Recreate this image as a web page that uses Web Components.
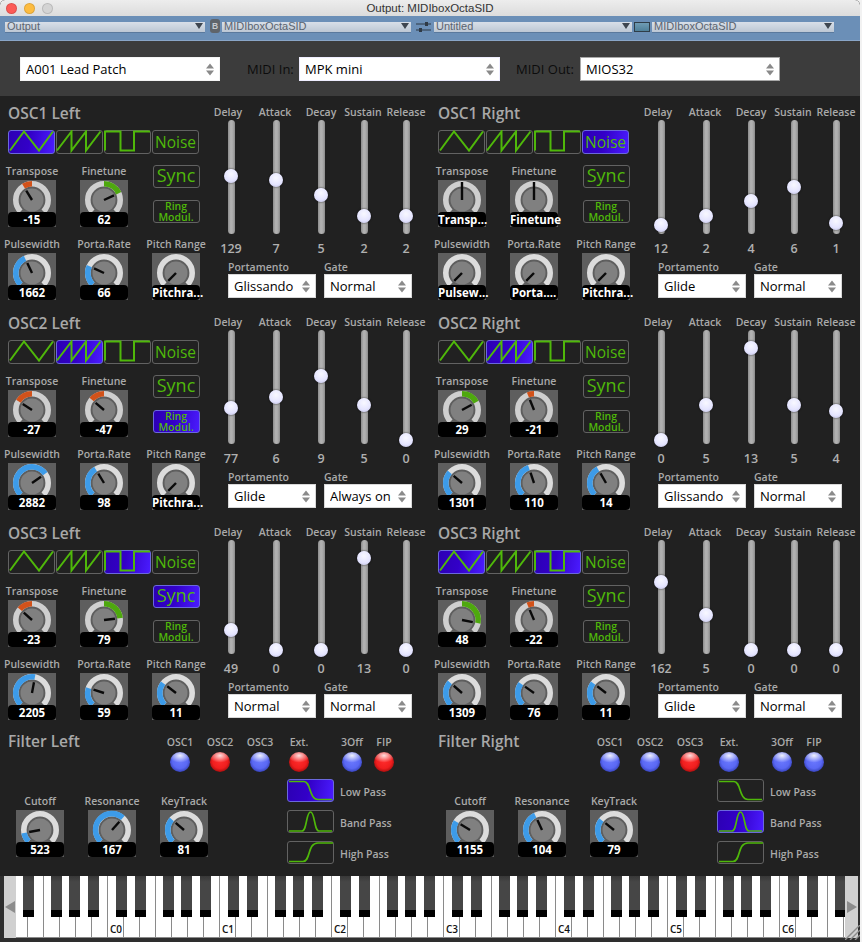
<!DOCTYPE html>
<html><head><meta charset="utf-8"><title>Output: MIDIboxOctaSID</title>
<style>
html,body{margin:0;padding:0;background:#f2f2f2}
body{width:862px;height:942px;overflow:hidden;font-family:"Open Sans",sans-serif}
</style></head><body>
<synth-window></synth-window>
<script>
const FONT='"Open Sans",sans-serif';
function define(name,css,render){
  customElements.define(name,class extends HTMLElement{
    connectedCallback(){
      if(this.shadowRoot)return;
      const r=this.attachShadow({mode:'open'});
      r.innerHTML='<style>'+css+'</style>'+render(this);
    }
  });
}
const A=(e,n,d='')=>e.hasAttribute(n)?e.getAttribute(n):d;

define('mac-titlebar',`
:host{display:flex;align-items:center;height:16px;background:linear-gradient(#ededed,#dcdcdc);border-radius:5px 5px 0 0;font:11.5px "Liberation Sans",sans-serif;color:#333}
.dots{display:flex;gap:7px;padding-left:6px;width:60px;box-sizing:border-box}
i{width:11px;height:11px;border-radius:50%;box-sizing:border-box;border:1px solid rgba(0,0,0,.12)}
.t{flex:1;text-align:center;padding-right:60px}
`,e=>`<div class="dots"><i style="background:#fc5b57"></i><i style="background:#fdbc40"></i><i style="background:#d4d4d4"></i></div><div class="t"><slot></slot></div>`);

define('tool-select',`
:host{display:flex;height:10px;background:linear-gradient(#d8dfe8,#bcc7d4);font:11px/8px "Liberation Sans",sans-serif;color:#5b6470;box-shadow:0 1px 0 rgba(60,80,110,.35);box-sizing:border-box;padding-left:2px;align-items:flex-start}
.t{flex:1;white-space:nowrap}
svg{flex:none;margin:1px 2px 0 0}
`,e=>`<div class="t"><slot></slot></div><svg width="8" height="6" viewBox="0 0 8 6"><path d="M0 0H8L4 6Z" fill="#3e4650"/></svg>`);

define('tool-bar',`
:host{display:flex;align-items:flex-start;height:25px;box-sizing:border-box;padding:6px 0 0 5px;background:#6b8fb7;border-bottom:1px solid #8aa6c8}
.b{width:10px;height:14px;margin:-3px 2px 0 5px;background:#5f646a;border-radius:3px;color:#c4c8cc;font:bold 8.5px/14px "Liberation Sans",sans-serif;text-align:center}
.s{margin:-1px 3px 0 5px;flex:none}
.c{width:16px;height:10px;box-sizing:border-box;margin:0 2px;background:linear-gradient(#6f9cb4,#4f8099);border:1px solid #2f3d48}
`,e=>`<tool-select style="width:200px">Output</tool-select><div class="b">B</div><tool-select style="width:189px">MIDIboxOctaSID</tool-select>
<svg class="s" width="15" height="13" viewBox="0 0 15 13"><path d="M0 3H15M0 9H15" stroke="#2f3a46" stroke-width="1.2"/><rect x="9" y="1" width="3" height="4" fill="#2f3a46"/><rect x="3" y="7" width="3" height="4" fill="#2f3a46"/></svg>
<tool-select style="width:198px">Untitled</tool-select><div class="c"></div><tool-select style="width:182px">MIDIboxOctaSID</tool-select>`);

define('syn-select',`
:host{display:flex;align-items:center;box-sizing:border-box;height:24px;background:#fff;border:1px solid var(--bd,#d8d8d8);color:#000;font:13px/20px ${FONT};padding:0 5px}
.t{flex:1;white-space:nowrap;overflow:hidden}
svg{flex:none}
`,e=>`<div class="t"><slot></slot></div><svg width="8" height="13" viewBox="0 0 8 13"><path d="M0 5.4H8L4 0.6ZM0 7.6H8L4 12.4Z" fill="#8a8a8a"/></svg>`);

define('patch-header',`
:host{display:flex;align-items:center;height:55px;box-sizing:border-box;padding:1px 0 0 20px;background:#3c3c3c;font:13px ${FONT};color:#0c0c0c}
.l{white-space:nowrap;flex:none}
`,e=>`<syn-select style="width:200px;--bd:#f4f4f4">A001 Lead Patch</syn-select>
<div class="l" style="width:47px;margin:0 5px 0 27px">MIDI In:</div>
<syn-select style="width:201px;--bd:#efeeff">MPK mini</syn-select>
<div class="l" style="width:58px;margin:0 6px 0 16px">MIDI Out:</div>
<syn-select style="width:200px;--bd:#a8a8a8">MIOS32</syn-select>`);

function wedge(a,b){
  const p=d=>{const r=(d-90)*Math.PI/180;return (24+16.2*Math.cos(r)).toFixed(2)+' '+(20+16.2*Math.sin(r)).toFixed(2)};
  return `M${p(a)}A16.2 16.2 0 ${Math.abs(b-a)>180?1:0} ${b>a?1:0} ${p(b)}`;
}
define('syn-knob',`
:host{display:block;width:48px;color:#aaa;font:600 10.5px ${FONT}}
.l{display:flex;justify-content:center;height:15px;line-height:12px;white-space:nowrap}
.k{position:relative;width:48px;height:47px;background:#5e5e5e}
svg{display:block}
.v{position:absolute;left:0;right:0;bottom:0;height:15px;border-radius:4px;background:#000;color:#fff;font:bold 11.5px/15px ${FONT};text-align:center;white-space:nowrap}
`,e=>{
  const ang=+A(e,'angle',-135),kind=A(e,'kind','uni');
  let fill='';
  if(kind==='uni'){ if(ang>-135)fill=`<path d="${wedge(-135,ang)}" stroke="#3d9be8" stroke-width="5.6" fill="none"/>`; }
  else if(ang!==0){ fill=`<path d="${wedge(0,ang)}" stroke="${ang<0?'#d2521a':'#4ea80e'}" stroke-width="5.6" fill="none"/>`; }
  const len=(kind==='bi'&&ang===0)?18:11,r=(ang-90)*Math.PI/180;
  return `<div class="l">${A(e,'label')}</div><div class="k"><svg width="48" height="47" viewBox="0 0 48 47">
  <path d="${wedge(-135,135)}" stroke="${kind==='bi'?'#cfcfcf':'#dcdcdc'}" stroke-width="5.6" fill="none"/>${fill}
  <circle cx="24" cy="20" r="11.5" fill="#808080"/>
  <line x1="24" y1="20" x2="${(24+len*Math.cos(r)).toFixed(2)}" y2="${(20+len*Math.sin(r)).toFixed(2)}" stroke="#0a0a0a" stroke-width="2.4"/>
  </svg><div class="v"><slot></slot></div></div>`;
});

define('syn-slider',`
:host{display:flex;flex-direction:column;align-items:center;color:#aaa;font:600 10.5px ${FONT}}
.l{display:flex;justify-content:center;height:15px;line-height:15px;white-space:nowrap}
.tr{position:relative;width:7px;height:114px;border-radius:4px;background:linear-gradient(90deg,#8c8c8c,#b4b4b4 40%,#aaa 70%,#8a8a8a)}
.th{position:absolute;left:50%;width:14px;height:14px;margin:-7px 0 0 -7px;border-radius:50%;background:radial-gradient(circle at 50% 35%,#f8f8ff,#e4e4ff 60%,#b4b4d8);box-shadow:0 0 2px rgba(0,0,0,.85)}
.v{margin-top:7px;height:16px;font-size:12.5px;line-height:15px;color:#b0b0b0}
`,e=>`<div class="l" style="padding-right:${A(e,'nudge','0')}px">${A(e,'label')}</div><div class="tr"><div class="th" style="top:${+A(e,'thumb')-120}px"></div></div><div class="v"><slot></slot></div>`);

const WAVES=[
 'M2 20.5L16 1.5L31 20.5L45 1.5',
 'M1 20.5L15.5 1.5V20.5L30 1.5V20.5L44.5 1.5',
 'M1 20.5V1.5H16.5V20.5H30V1.5H46'
];
const FILT=[
 'M2 2.5H17C24 2.5 22 20.5 31 20.5H45',
 'M2 21H15C20 21 19 2 23.5 2C28 2 27 21 32 21H45',
 'M2 20.5H16C24 20.5 20 2 31 2H46'
];
const BTN=`:host{display:block;position:relative;box-sizing:border-box;border:1.5px solid #626262;border-radius:3px;width:47px;height:23px;color:#4fb80a;text-align:center}
:host([on]){background:linear-gradient(100deg,#2c00b4,#3300c8 45%,#4a1cff);border-color:#6a68dc}
svg{display:block;position:absolute;left:-1.5px;top:-1.5px}`;
define('wave-btn',BTN,e=>`<svg width="47" height="24" viewBox="0 0 47 24"><path d="${WAVES[+A(e,'wave')]}" fill="none" stroke="#4fb80a" stroke-width="2"/></svg>`);
define('filter-btn',BTN,e=>`<svg width="47" height="23" viewBox="0 0 47 23"><path d="${FILT[+A(e,'curve')]}" fill="none" stroke="#4fb80a" stroke-width="1.7"/></svg>`);
define('text-btn',BTN+`:host{display:flex;align-items:center;justify-content:center;font:15.5px ${FONT};white-space:nowrap}
:host([big]){font-size:18px;padding-bottom:3px}
:host([small]){font:600 10.5px/10.5px ${FONT};white-space:normal}`,e=>`<div><slot></slot></div>`);

define('syn-led',`
:host{display:flex;flex-direction:column;align-items:center;font:600 10.5px ${FONT};color:#aaa}
.l{height:17px;line-height:14px;white-space:nowrap}
.d{width:20px;height:20px;border-radius:50%}
:host([c=b]) .d{background:radial-gradient(ellipse 55% 35% at 50% 18%,rgba(255,255,255,.9),rgba(255,255,255,0)),radial-gradient(circle at 50% 45%,#6a78ff 0,#5a68f4 50%,#3a46c0 72%,#161c60 100%)}
:host([c=r]) .d{background:radial-gradient(ellipse 55% 35% at 50% 18%,rgba(255,255,255,.85),rgba(255,255,255,0)),radial-gradient(circle at 50% 45%,#ff2c2c 0,#f01e1e 50%,#b01010 72%,#4a0606 100%)}
`,e=>`<div class="l"><slot></slot></div><div class="d"></div>`);

const fmtA={t:v=>v/64*135,f:v=>v/128*135,p:v=>-135+270*v/4095,r:v=>-135+270*v/255,g:v=>-135+270*v/36};
function knob(label,val,angle,kind){return `<syn-knob label="${label}" angle="${angle.toFixed(1)}" kind="${kind}">${val}</syn-knob>`}
function num(v){return typeof v==='number'}
const SL=[['Delay',46,6],['Attack',44,2],['Decay',46,0],['Sustain',40,2],['Release',44,0]];
define('osc-panel',`
:host{display:grid;grid-template-columns:208px 222px;height:210px;box-sizing:border-box;padding-top:5px;color:#aaa;font:600 10.5px ${FONT}}
.left{padding-left:8px}
h2{margin:0;height:25px;font:600 15.5px/16px ${FONT};color:#a8a8a8}
.waves{display:flex;gap:1px;height:24px;margin-bottom:11px}
.waves>*{height:24px}
.kg{display:grid;grid-template-columns:repeat(3,48px);column-gap:24px;row-gap:11px;grid-auto-rows:62px}
.btns{display:flex;flex-direction:column;gap:12px;align-items:center}
.sl{display:grid;grid-template-columns:46px 44px 46px 40px 44px;height:155px}
.sel{display:flex;gap:8px;padding-left:20px}
.sel .l{height:14px;line-height:14px}
`,e=>{
  const c=JSON.parse(A(e,'cfg'));
  const w=[0,1,2].map(i=>`<wave-btn wave="${i}" ${c.w.includes(i)?'on':''}></wave-btn>`).join('');
  const tv=c.k[0],fv=c.k[1],pv=c.k[2],rv=c.k[3],gv=c.k[4];
  const k=[
    knob('Transpose',tv,num(tv)?fmtA.t(tv):0,'bi'),
    knob('Finetune',fv,num(fv)?fmtA.f(fv):0,'bi'),
    `<div class="btns"><text-btn big ${c.sync?'on':''}>Sync</text-btn><text-btn small ${c.ring?'on':''}>Ring Modul.</text-btn></div>`,
    knob('Pulsewidth',pv,num(pv)?fmtA.p(pv):-135,'uni'),
    knob('Porta.Rate',rv,num(rv)?fmtA.r(rv):-135,'uni'),
    knob('Pitch Range',gv,num(gv)?fmtA.g(gv):-135,'uni')
  ].join('');
  const sl=SL.map((s,i)=>`<syn-slider label="${s[0]}" nudge="${s[2]}" thumb="${c.t[i]}">${c.v[i]}</syn-slider>`).join('');
  return `<div class="left"><h2>${A(e,'name')}</h2><div class="waves">${w}<text-btn ${c.w.includes(3)?'on':''} style="height:24px">Noise</text-btn></div><div class="kg">${k}</div></div>
  <div><div class="sl">${sl}</div><div class="sel"><div><div class="l">Portamento</div><syn-select style="width:88px">${c.p}</syn-select></div><div><div class="l">Gate</div><syn-select style="width:88px">${c.g}</syn-select></div></div></div>`;
});

define('filter-panel',`
:host{display:block;height:146px;color:#aaa;font:600 10.5px ${FONT}}
.top{display:flex;height:49px;box-sizing:border-box;padding:2px 0 0 8px}
h2{margin:0;width:152px;font:600 15.5px/18px ${FONT};color:#a8a8a8}
.leds{display:flex;padding-top:3px}
.bot{display:flex}
.ks{display:flex;gap:24px;padding:16px 0 0 16px}
.fb{display:flex;flex-direction:column;gap:8px;margin-left:79px}
.row{display:flex;align-items:center;gap:6px;white-space:nowrap;height:23px}
.row span{margin-top:2px}
`,e=>{
  const c=JSON.parse(A(e,'cfg'));
  const L=['OSC1','OSC2','OSC3','Ext.','3Off','FIP'],W=[40,40,40,38,40,24];
  const leds=L.map((l,i)=>`<syn-led c="${c.l[i]}" style="width:${W[i]}px;${i==4?'margin-left:14px':''}">${l}</syn-led>`).join('');
  const F=['Low Pass','Band Pass','High Pass'];
  const rows=F.map((f,i)=>`<div class="row"><filter-btn curve="${i}" ${c.f==i?'on':''}></filter-btn><span>${f}</span></div>`).join('');
  return `<div class="top"><h2>${A(e,'name')}</h2><div class="leds">${leds}</div></div>
  <div class="bot"><div class="ks">${knob('Cutoff',c.k[0],-135+270*c.k[0]/4095,'uni')}${knob('Resonance',c.k[1],fmtA.r(c.k[1]),'uni')}${knob('KeyTrack',c.k[2],fmtA.r(c.k[2]),'uni')}</div><div class="fb">${rows}</div></div>`;
});

define('piano-keys',`
:host{display:flex;height:66px;box-sizing:border-box;padding:0 2px 4px 4px;background:#2e2e2e;position:relative}
.btn{flex:none;width:12px;background:#d0d0d0;display:flex;align-items:center;justify-content:center}
.btn svg{display:block}
.area{flex:1;position:relative;overflow:hidden;display:flex;background:#fff;border-bottom:1px solid #8a8a8a}
.w{flex:none;width:16px;box-sizing:border-box;border-right:1px solid #8a8a8a;display:flex;align-items:flex-end;padding:0 0 1px 2px;font:600 10px/13px ${FONT};color:#111}
.b{position:absolute;top:0;width:11px;height:41px;background:linear-gradient(#383838,#464646 6px);border-bottom:7px solid #000;box-sizing:border-box}
.grip{position:absolute;right:0;bottom:2px;display:block}
`,e=>{
  let w='<div class="w" style="width:12px"></div>';
  ['E','F','G','A','B'].forEach(()=>w+='<div class="w"></div>');
  for(let o=0;o<7;o++)for(let n=0;n<7;n++)w+=`<div class="w">${n==0?'C'+o:''}</div>`;
  let b='';
  for(let o=-1;o<7;o++)[8,27,55,73,92].forEach(x=>{const l=92+o*112+x;if(l>-11&&l<830)b+=`<div class="b" style="left:${l}px"></div>`});
  return `<div class="btn"><svg width="10" height="12" viewBox="0 0 10 12"><path d="M0 6L10 0V12Z" fill="#8c8c8c"/></svg></div><div class="area">${w}${b}</div><div class="btn" style="width:13px"><svg width="10" height="12" viewBox="0 0 10 12"><path d="M10 6L0 0V12Z" fill="#8c8c8c"/></svg></div>
  <svg class="grip" width="15" height="15" viewBox="0 0 15 15"><path d="M0 15L15 0M5 15L15 5M10 15L15 10" stroke="#8c8c8c" stroke-width="1.4"/></svg>`;
});

const OSC=[
 ['OSC1 Left',{w:[0],k:[-15,62,1662,66,'Pitchra...'],t:[176,180,195,216,216],v:[129,7,5,2,2],p:'Glissando',g:'Normal'}],
 ['OSC1 Right',{w:[3],k:['Transp...','Finetune','Pulsew...','Porta....','Pitchra...'],t:[225,216,201,187,223],v:[12,2,4,6,1],p:'Glide',g:'Normal'}],
 ['OSC2 Left',{w:[1],ring:1,k:[-27,-47,2882,98,'Pitchra...'],t:[198,187,166,195,230],v:[77,6,9,5,0],p:'Glide',g:'Always on'}],
 ['OSC2 Right',{w:[1],k:[29,-21,1301,110,14],t:[230,195,138,195,201],v:[0,5,13,5,4],p:'Glissando',g:'Normal'}],
 ['OSC3 Left',{w:[2],sync:1,k:[-23,79,2205,59,11],t:[210,230,230,138,230],v:[49,0,0,13,0],p:'Normal',g:'Normal'}],
 ['OSC3 Right',{w:[0,2],k:[48,-22,1309,76,11],t:[162,195,230,230,230],v:[162,5,0,0,0],p:'Glide',g:'Normal'}]
];
const esc=o=>JSON.stringify(o).replace(/"/g,'&quot;');
define('synth-window',`
:host{display:flex;flex-direction:column;width:860px;height:942px;background:#3c3c3c;border-radius:5px 5px 0 0;overflow:hidden}
.main{display:grid;grid-template-columns:430px 430px;grid-auto-rows:min-content;height:780px;box-sizing:border-box;padding-top:4px;background:#212121}
`,e=>`<mac-titlebar>Output: MIDIboxOctaSID</mac-titlebar><tool-bar></tool-bar><patch-header></patch-header>
<div class="main">${OSC.map(o=>`<osc-panel name="${o[0]}" cfg="${esc(o[1])}"></osc-panel>`).join('')}
<filter-panel name="Filter Left" cfg="${esc({l:'brbrbr',f:0,k:[523,167,81]})}"></filter-panel>
<filter-panel name="Filter Right" cfg="${esc({l:'bbrbbb',f:1,k:[1155,104,79]})}"></filter-panel></div>
<piano-keys></piano-keys>`);
</script></body></html>
